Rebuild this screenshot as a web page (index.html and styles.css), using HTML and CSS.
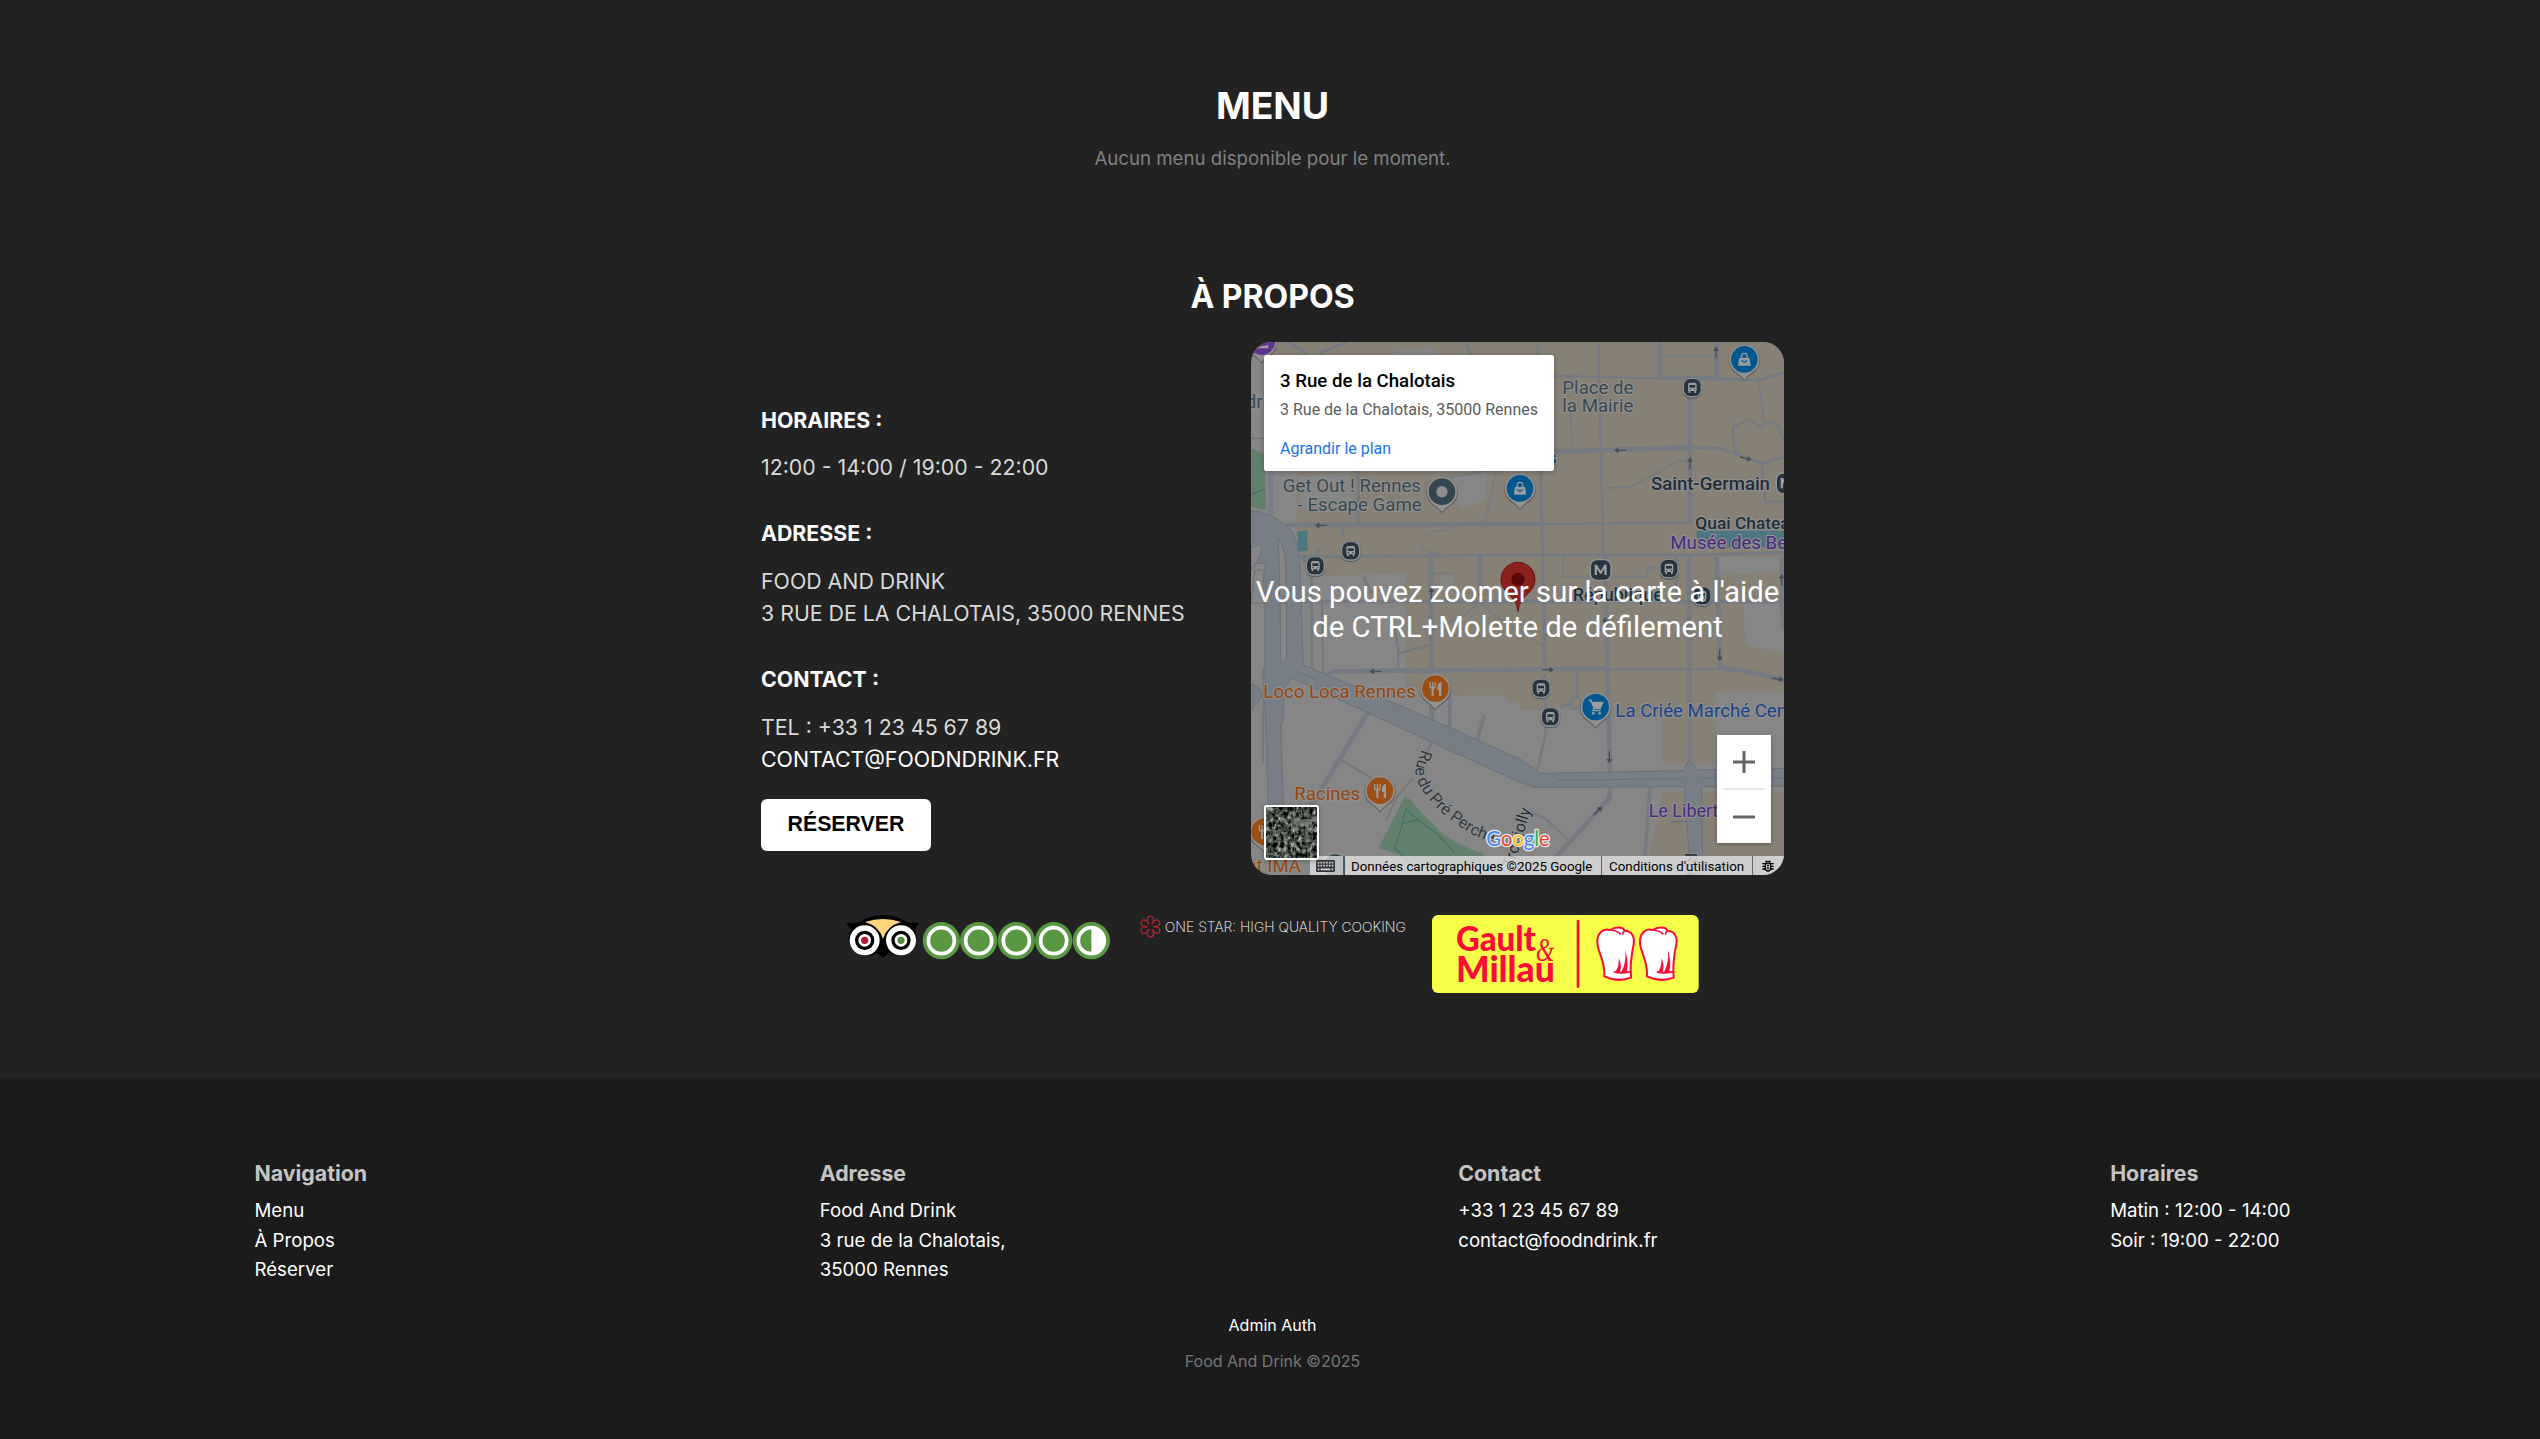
FILE: index.html
```html
<!DOCTYPE html>
<html lang="fr">
<head>
<meta charset="utf-8">
<title>Food And Drink</title>
<link rel="stylesheet" href="styles.css">
</head>
<body>
<main class="main">
  <section class="menu">
    <h1 class="menu-title">MENU</h1>
    <p class="menu-empty">Aucun menu disponible pour le moment.</p>
  </section>

  <section class="about">
    <h2 class="about-title">À PROPOS</h2>
    <div class="about-row">
      <div class="info">
        <div class="info-block first">
          <h3>HORAIRES :</h3>
          <p>12:00 - 14:00 / 19:00 - 22:00</p>
        </div>
        <div class="info-block">
          <h3>ADRESSE :</h3>
          <p>FOOD AND DRINK<br>3 RUE DE LA CHALOTAIS, 35000 RENNES</p>
        </div>
        <div class="info-block">
          <h3>CONTACT :</h3>
          <p>TEL : +33 1 23 45 67 89<br><a href="#">CONTACT@FOODNDRINK.FR</a></p>
        </div>
        <button class="book" type="button">RÉSERVER</button>
      </div>

      <div class="map">
        <svg class="map-canvas" viewBox="33 36 1599 1599" aria-hidden="true">
          <defs>
            <g id="drop"><path d="M0 63C-8 50-20 44-32 34A47 47 0 1 1 32 34C20 44 8 50 0 63Z" fill="#5d5f62" transform="translate(0 3)"/><path d="M0 61C-8 49-20 43-31 33A45 45 0 1 1 31 33C20 43 8 49 0 61Z" fill="#929292"/></g>
            <g id="pin-bag"><use href="#drop"/><circle r="40" fill="#00568f"/><path d="M-15-5H15L19 19H-19Z" fill="#9b9b9b"/><path d="M-8-5V-10A8 8 0 0 1 8-10V-5" fill="none" stroke="#9b9b9b" stroke-width="4"/><path d="M-8 3Q0 14 8 3" fill="none" stroke="#00568f" stroke-width="4"/></g>
            <g id="pin-food"><use href="#drop"/><circle r="40" fill="#9c4f15"/><path d="M-18-20V-7Q-18 0-11 0V22H-5V0Q2 0 2-7V-20H-2V-6H-6V-20H-10V-6H-14V-20ZM18-20Q6-18 6-4V4H11V22H18Z" fill="#9b9b9b"/></g>
            <g id="pin-cart"><use href="#drop"/><circle r="40" fill="#00568f"/><path d="M-21-20H-14L-4 4H13L21-13H-11" fill="none" stroke="#9b9b9b" stroke-width="5"/><path d="M-11-13H21L12 4H-4Z" fill="#9b9b9b"/><path d="M-4 4L-9 11H15" fill="none" stroke="#9b9b9b" stroke-width="4"/><circle cx="-7" cy="19" r="4" fill="#9b9b9b"/><circle cx="12" cy="19" r="4" fill="#9b9b9b"/></g>
            <g id="bus"><rect x="-30" y="-29" width="60" height="62" rx="24" fill="#5c6065"/><rect x="-29" y="-29" width="58" height="58" rx="23" fill="#909498"/><rect x="-25" y="-26" width="50" height="51" rx="19" fill="#27343f"/><path d="M-13-9Q-13-15-7-15H7Q13-15 13-9V10H11V16H6V10H-6V16H-11V10H-13Z" fill="#9a9da0"/><rect x="-9" y="-8" width="18" height="8" fill="#27343f"/><circle cx="-7" cy="5" r="2" fill="#27343f"/><circle cx="7" cy="5" r="2" fill="#27343f"/></g>
            <g id="metro"><rect x="-33" y="-33" width="66" height="66" rx="21" fill="#909498"/><rect x="-29" y="-29" width="58" height="58" rx="18" fill="#27343f"/><path d="M-18 15V-16H-11L0 3 11-16H18V15H11V-3L2 11H-2L-11-3V15Z" fill="#9a9da0"/></g>
            <path id="arrow" d="M-18-2H5V-9L18 0 5 9V2H-18Z" fill="#474d54"/>
            <path id="perche" d="M545 1258L527 1310Q523 1350 550 1385 590 1450 700 1515 750 1540 800 1545"/>
            <path id="tronjolly" d="M819 1616L886 1396"/>
          </defs>
          <rect x="33" y="36" width="1599" height="1599" fill="#868686"/>
          <path d="M100 36H1632V1085H1427V1300H1267V1165H1110V1140H840V1112L815 1125 790 1095 495 1100V730L200 740 170 620V420H95Z" fill="#878175"/>
          <path d="M1270 1385H1632V1578H1225Z" fill="#878175"/>
          <path d="M1427 680H1615V728L1427 735ZM1510 810H1632V970L1516 945ZM1427 1085H1632V1300H1427ZM180 440L330 425 340 530 180 540ZM640 440L740 425V510L660 540ZM470 60L580 50V75H450ZM600 740H640V790H600Z" fill="#868686"/>
          <path d="M33 355L75 375 78 540 33 530Z" fill="#627f6c"/>
          <path d="M495 1400Q510 1405 520 1420L600 1505Q660 1550 730 1570V1600L600 1610 415 1555Z" fill="#637f6d"/>
          <g fill="none" stroke="#48725c" stroke-width="4"><path d="M33 495L75 475M497 1436L535 1470 595 1515 645 1570M497 1436L487 1480 465 1555 510 1600M487 1480L535 1470"/></g>
          <path d="M173 603H202V662L173 665ZM1370 602H1632V652H1370ZM33 605L60 640V680L33 655Z" fill="#4c7781"/>

          <g fill="none" stroke="#757575" stroke-width="5">
            <path d="M70 1010V1300M245 810L250 1040M465 890L475 960 475 1020M475 970L565 945M305 1290L395 1345M520 1345L470 1400 440 1470M33 325H75M1290 1475H1350"/>
          </g>
          <g fill="none" stroke="#757a82" stroke-linejoin="round">
            <path stroke-width="14" d="M140 585L905 582M572 670L575 1180M720 670V812M942 365L1350 353M1350 150V583M1347 675L1350 1310M1260 36V143L1430 145V36M1095 680L1097 810 1110 1330M250 1037Q275 1023 300 1024L1097 1016M1430 680L1440 1015 1500 1020 1632 1050M1110 1370L1108 1405 940 1590"/>
            <path stroke-width="16" stroke-linecap="round" d="M385 1145L240 1385 215 1420"/>
            <path stroke-width="11" d="M178 815H1632M355 420V580M630 1090L628 1215M733 1155L706 1250M1230 1370L1215 1578M1625 680V830L1632 900"/>
            <path stroke-width="9" d="M1350 353L1440 355 1570 400 1632 380M180 680L840 675H1350L1632 668M902 420L915 1020M575 1235L560 1270M1011 1020V1100M960 1130L1000 1120M215 735V1020M1632 128L1560 150 1430 148"/>
            <path stroke-width="7" d="M942 138L1260 145M893 36V75M1075 36L1090 680M905 582L1350 578M1097 1018H1435M915 1030L917 1210 890 1330M1490 370Q1475 340 1480 290L1530 268 1560 292Q1600 265 1615 285L1632 330M1565 400L1575 515H1632M870 1445L915 1465 985 1530"/>
            <path stroke-width="5" d="M1095 475L1175 470 1310 395 1350 390M1555 140L1572 280M990 210L997 355M970 680V740H1220L1225 715 1255 712M1270 77H1430M463 890L475 970 475 1015M475 970L565 948M580 900L675 855 720 815 760 855 915 950M545 645L550 665 600 670M555 730H640M580 450L700 430 860 400M770 420L735 575M560 618L580 605 615 602 650 585"/>
            <path stroke-width="10" d="M145 36L200 70M240 70L320 36M680 36L690 75M1285 680V712M1310 680V812M305 595L312 620M370 740L395 790M240 655L220 685 185 690"/>
            <circle cx="1005" cy="1119" r="17" stroke-width="6"/>
          </g>
          <g fill="#787e86" stroke="#6a7179" stroke-width="3">
            <path d="M30 540Q100 550 145 592 175 620 180 700L190 1005 500 1135 845 1290 900 1330 1330 1322 1340 1300H1360L1372 1320 1640 1315V1368L1385 1370 1388 1640H1352L1333 1370 885 1372 825 1350 500 1202 155 1043 132 1075 130 1170 122 1180 130 1430H85L75 1120V700H30Z"/>
            <path d="M33 1060Q80 1080 60 1110L33 1140"/>
          </g>
          <g fill="#868686" stroke="#6a7179" stroke-width="3"><path d="M120 820H140V985L122 1005ZM115 625Q135 650 136 700L140 800 120 795ZM33 655L60 640Q75 670 33 720ZM45 720H70V820H33Z"/></g>
          <path d="M950 1351L1330 1346M1380 1344H1632M170 1025L230 1050" stroke="#6a7179" stroke-width="3" fill="none"/>
          <path d="M92 420V560" stroke="#787e86" stroke-width="16"/>

          <g class="map-labels">
            <text x="68" y="235" text-anchor="end">dr</text>
            <text x="543" y="486" text-anchor="end">Get Out ! Rennes</text>
            <text x="545" y="542" text-anchor="end">- Escape Game</text>
            <text x="967" y="191">Place de</text>
            <text x="967" y="247">la Mairie</text>
            <text class="station" x="1233" y="479" textLength="357">Saint-Germain</text>
            <text class="station quai" x="1366" y="598">Quai Chateaubriand</text>
            <text class="station republique" x="998" y="813">République</text>
            <text class="museum" x="1291" y="658">Musée des Beaux-Arts</text>
            <text class="museum liberte" x="1226" y="1461">Le Liberté</text>
            <text class="food" x="70" y="1104">Loco Loca Rennes</text>
            <text class="food" x="163" y="1410">Racines</text>
            <text class="food" x="183" y="1626" text-anchor="end">Restaurant IMA</text>
            <text class="shop" x="1126" y="1160">La Criée Marché Central</text>
            <text class="shop station" x="950" y="402" text-anchor="end">s</text>
            <text class="street"><textPath href="#perche">Rue du Pré Perché</textPath></text>
            <text class="street tron"><textPath href="#tronjolly">Tronjolly</textPath></text>
            <text class="street" transform="translate(1336 1568) rotate(90)">Rue</text>
          </g>
          <g>
            <use href="#arrow" transform="translate(243 586) rotate(180)"/><use href="#arrow" transform="translate(1140 361) rotate(180)"/><use href="#arrow" transform="translate(407 1024) rotate(180)"/>
            <use href="#arrow" transform="translate(924 1019)"/><use href="#arrow" transform="translate(1517 385) rotate(16)"/><use href="#arrow" transform="translate(1613 1047) rotate(10)"/>
            <use href="#arrow" transform="translate(1428 67) rotate(-90)"/><use href="#arrow" transform="translate(1350 400) rotate(-90)"/><use href="#arrow" transform="translate(1625 750) rotate(-90)"/><use href="#arrow" transform="translate(1095 880) rotate(-90)"/><use href="#arrow" transform="translate(574 790) rotate(-90)"/>
            <use href="#arrow" transform="translate(1439 975) rotate(90)"/><use href="#arrow" transform="translate(1108 1282) rotate(90)"/><use href="#arrow" transform="translate(1073 1443) rotate(-46)"/><use href="#arrow" transform="translate(722 785) rotate(90)"/>
          </g>
          <use href="#drop" transform="translate(65 35)"/><circle cx="65" cy="35" r="40" fill="#5f3590"/><path d="M45 44L58 50 85 45V55H45Z" fill="#9b9b9b"/>
          <use href="#drop" transform="translate(333 117)"/>
          <use href="#drop" transform="translate(606 485)"/><circle cx="606" cy="485" r="40" fill="#33464f"/><circle cx="606" cy="485" r="17" fill="#8f8f8f"/>
          <use href="#pin-bag" transform="translate(840 475)"/><use href="#pin-bag" transform="translate(1513 88)"/>
          <use href="#pin-food" transform="translate(586 1076)"/><use href="#pin-food" transform="translate(420 1382)"/><use href="#pin-food" transform="translate(74 1505)"/>
          <use href="#pin-cart" transform="translate(1067 1131)"/>
          <use href="#bus" transform="translate(226 708)"/><use href="#bus" transform="translate(332 663)"/><use href="#bus" transform="translate(1357 173)"/><use href="#bus" transform="translate(1287 716)"/><use href="#bus" transform="translate(1386 798)"/><use href="#bus" transform="translate(903 1075)"/><use href="#bus" transform="translate(931 1161)"/>
          <circle cx="285" cy="1607" r="37" fill="#33464f" stroke="#929292" stroke-width="6"/>
          <use href="#metro" transform="translate(1082 720)"/><use href="#metro" transform="translate(1640 460)"/>
          <path d="M834 844C829 815 823 808 803 790 790 776 783 765 783 748A51 51 0 0 1 885 748C885 765 878 776 865 790 845 808 839 815 834 844Z" fill="#8b211c" stroke="#651511" stroke-width="3"/><circle cx="834" cy="748" r="20" fill="#590808"/>
        </svg>

        <p class="map-hint">Vous pouvez zoomer sur la carte à l'aide<br>de CTRL+Molette de défilement</p>

        <div class="place-card">
          <strong>3 Rue de la Chalotais</strong>
          <span>3 Rue de la Chalotais, 35000 Rennes</span>
          <a href="#">Agrandir le plan</a>
        </div>

        <svg class="google" viewBox="735 1490 200 76" aria-label="Google">
          <text x="739" y="1547" textLength="190" lengthAdjust="spacingAndGlyphs"><tspan fill="#4285f4">G</tspan><tspan fill="#ea4335">o</tspan><tspan fill="#fbbc04">o</tspan><tspan fill="#4285f4">g</tspan><tspan fill="#34a853">l</tspan><tspan fill="#ea4335">e</tspan></text>
        </svg>

        <div class="zoom-ctrl">
          <svg viewBox="0 0 54 54"><path d="M16 27H38M27 16V38"/></svg>
          <i></i>
          <svg viewBox="0 0 54 54"><path d="M16 27H38"/></svg>
        </div>

        <div class="attribution">
          <span class="keys"><svg viewBox="0 0 57 36"><rect width="57" height="36" rx="4" fill="#33373b"/><path d="M5 8H52M5 17H52" stroke="#d5d5d5" stroke-width="5" stroke-dasharray="5 3.4"/><path d="M5 28H10M14 28H43M47 28H52" stroke="#d5d5d5" stroke-width="5"/></svg></span>
          <span class="data">Données cartographiques ©2025 Google</span>
          <span class="terms">Conditions d'utilisation</span>
          <span class="bug"><svg viewBox="0 0 36 36"><path d="M10 11H26V24A8 9 0 0 1 10 24ZM12 11A6 6 0 0 1 24 11M11 2L15 6M25 2L21 6M1 11H10M26 11H35M1 19H10M26 19H35M1 27H10M26 27H35M15 17H21M15 24H21" fill="none" stroke="#000" stroke-width="4"/></svg></span>
        </div>

        <svg class="satellite" viewBox="0 0 50 50" aria-hidden="true">
          <filter id="roofs" x="0" y="0" width="100%" height="100%" color-interpolation-filters="sRGB"><feTurbulence type="fractalNoise" baseFrequency=".28 .2" numOctaves="4" seed="8"/><feColorMatrix values="1.3 .3 0 0 -.53 1.3 .3 0 0 -.5 1.3 .3 0 0 -.53 0 0 0 0 1"/></filter>
          <rect width="50" height="50" filter="url(#roofs)"/>
          <path d="M0 14L50 12M0 23L50 22M0 34L50 33M28 0V50M41 0V50" stroke="#6f766f" stroke-width="1" opacity=".65"/>
          <rect x="27" y="12" width="18" height="6" fill="#7a8078" opacity=".6"/>
        </svg>
      </div>
    </div>

    <div class="awards">
      <svg class="award tripadvisor" viewBox="49 45 800 135" aria-label="Tripadvisor">
        <path d="M50 68H86Q120 45 160 45T235 68H268L256 88A55 55 0 0 1 178 158L160 174 142 158A55 55 0 0 1 62 88Z" fill="#000"/>
        <path d="M106 66Q160 48 214 66 172 78 160 116 148 78 106 66Z" fill="#ffd67b"/>
        <g fill="#fff"><circle cx="105" cy="121" r="45"/><circle cx="214" cy="121" r="45"/></g>
        <g fill="none" stroke="#000" stroke-width="10"><circle cx="105" cy="121" r="24"/><circle cx="214" cy="121" r="24"/></g>
        <circle cx="105" cy="121" r="11" fill="#b01c33"/><circle cx="214" cy="121" r="11" fill="#4f9040"/>
        <g fill="#5a9742"><circle cx="335" cy="122" r="56"/><circle cx="447" cy="122" r="56"/><circle cx="560" cy="122" r="56"/><circle cx="672" cy="122" r="56"/><circle cx="785" cy="122" r="56"/></g>
        <g fill="#5a9742" stroke="#fff" stroke-width="11"><circle cx="335" cy="122" r="39"/><circle cx="447" cy="122" r="39"/><circle cx="560" cy="122" r="39"/><circle cx="672" cy="122" r="39"/><circle cx="785" cy="122" r="39"/></g>
        <path d="M785 83A39 39 0 0 1 785 161Z" fill="#fff"/>
      </svg>
      <div class="award michelin">
        <svg viewBox="-33 -35 66 70" aria-hidden="true"><g fill="none" stroke="#c0242f" stroke-width="3.6"><path id="petal" d="M-5-8C-13-17-12-33 0-33S13-17 5-8"/><use href="#petal" transform="rotate(60)"/><use href="#petal" transform="rotate(120)"/><use href="#petal" transform="rotate(180)"/><use href="#petal" transform="rotate(240)"/><use href="#petal" transform="rotate(300)"/></g></svg>
        <span>ONE STAR: HIGH QUALITY COOKING</span>
      </div>
      <svg class="award gault" viewBox="486 45 800 234" aria-label="Gault et Millau">
        <rect x="486" y="45" width="800" height="234" rx="18" fill="#f7ff48"/>
        <g fill="#ff0b3a"><text x="558" y="154" font-size="105" textLength="240" lengthAdjust="spacingAndGlyphs">Gault</text><text x="558" y="245" font-size="106" textLength="296" lengthAdjust="spacingAndGlyphs">Millau</text>
        <text class="amp" x="797" y="184" font-size="100" textLength="56" lengthAdjust="spacingAndGlyphs">&amp;</text></g>
        <rect x="920" y="59" width="8" height="205" rx="4" fill="#ff0b3a"/>
        <g id="toque"><path d="M1003 229C1006 185 985 160 982 130 980 98 1000 84 1020 90 1035 80 1060 80 1064 92 1085 92 1095 112 1091 132 1084 165 1080 200 1083 233Q1045 248 1003 229Z" fill="#fff" stroke="#ff0b3a" stroke-width="6"/><path d="M1022 90Q1042 92 1052 103M1064 92Q1058 98 1058 104M1083 215Q1050 222 1032 215" fill="none" stroke="#ff0b3a" stroke-width="5"/><path d="M1036 216Q1048 200 1046 175 1057 195 1050 216ZM1054 216Q1069 190 1066 150 1077 190 1070 216Z" fill="#ff0b3a"/></g>
        <use href="#toque" x="128"/>
      </svg>
    </div>
  </section>
</main>

<footer class="footer">
  <div class="footer-cols">
    <nav><h4>Navigation</h4><a href="#">Menu</a><a href="#">À Propos</a><a href="#">Réserver</a></nav>
    <div><h4>Adresse</h4><p>Food And Drink</p><p>3 rue de la Chalotais,</p><p>35000 Rennes</p></div>
    <div><h4>Contact</h4><p>+33 1 23 45 67 89</p><a href="#">contact@foodndrink.fr</a></div>
    <div><h4>Horaires</h4><p>Matin : 12:00 - 14:00</p><p>Soir : 19:00 - 22:00</p></div>
  </div>
  <a class="admin" href="#">Admin Auth</a>
  <p class="copyright">Food And Drink ©2025</p>
</footer>
</body>
</html>
```
FILE: styles.css
```css
* { box-sizing: border-box; margin: 0; padding: 0; }
html { overflow: hidden; background: #1b1b1b; }
body {
  width: 2545px;
  background: #222;
  color: #fff;
  font-family: "Inter", "Liberation Sans", sans-serif;
  font-size: 21.333px;
  line-height: 32px;
}
a { color: inherit; text-decoration: none; }
svg { display: block; }

.main { height: 1078px; display: flex; flex-direction: column; align-items: center; padding-top: 78px; }
.menu { text-align: center; }
.menu-title { font-size: 37.333px; line-height: 56px; }
.menu-empty { margin-top: 11px; font-size: 18.667px; line-height: 28px; color: #808080; }

.about { margin-top: 100px; display: flex; flex-direction: column; align-items: center; }
.about-title { font-size: 32px; line-height: 48px; }
.about-row { display: flex; width: 1023px; justify-content: space-between; margin-top: 21px; }

.info { padding-top: 61.5px; color: #d9d9d9; }
.info h3 { font-size: 21.333px; font-weight: 700; color: #fff; margin-bottom: 16px; }
.info-block { margin-bottom: 34px; }
.info-block.first h3 { margin-bottom: 15px; }
.info-block a { color: #fff; }
.info-block:nth-child(3) { margin-bottom: 24.5px; }
.book {
  display: block; width: 170px; height: 52px; padding: 0 0 2px;
  border: 0; border-radius: 6px; background: #fff; color: #000;
  font: 700 21.333px "Liberation Sans", Arial, sans-serif;
}

.map {
  position: relative; width: 533px; height: 533px;
  border-radius: 21px; overflow: hidden;
  font-family: "Roboto", sans-serif;
}
.map-canvas { width: 533px; height: 533px; }
.map-labels { font-size: 56px; fill: #3a484f; stroke: #8f8f8f; stroke-width: 7px; stroke-linejoin: round; paint-order: stroke; }
.map-labels .station { font-weight: 500; fill: #222f3b; }
.map-labels .quai { font-size: 52px; }
.map-labels .republique { font-size: 54px; }
.map-labels .museum { fill: #4a2a80; }
.map-labels .liberte { font-size: 54px; }
.map-labels .food { fill: #944710; }
.map-labels .shop { fill: #1b4488; }
.map-labels .street { font-size: 49px; fill: #33383d; stroke-width: 5px; }
.map-labels .tron { fill: #252c33; }

.map-hint {
  position: absolute; inset: 0; display: flex; align-items: center; justify-content: center;
  padding-top: 2px;
  text-align: center; white-space: nowrap; font-size: 29.333px; line-height: 35px; color: #fff;
}
.place-card {
  position: absolute; left: 13px; top: 13px; width: 290px; height: 116px;
  padding: 14px 16px; background: #fff; border-radius: 2.5px;
  box-shadow: 0 1px 5px rgba(0, 0, 0, .3);
  display: flex; flex-direction: column; white-space: nowrap; font-size: 16px; line-height: 20px;
}
.place-card strong { font-size: 18.667px; font-weight: 500; line-height: 25px; color: #000; }
.place-card span { margin-top: 5.5px; color: #5b5b5b; }
.place-card a { margin-top: 19px; color: #1a73e8; }

.google { position: absolute; left: 234px; top: 485px; width: 66.6px; height: 25.3px; }
.google text { font: 400 64px "Lato", sans-serif; stroke: #e8e8e8; stroke-width: 8px; paint-order: stroke; stroke-linejoin: round; }

.zoom-ctrl {
  position: absolute; left: 466px; top: 393px; width: 54px; height: 108px;
  background: #fff; box-shadow: 0 1px 5px rgba(0, 0, 0, .3);
  display: flex; flex-direction: column; align-items: center;
}
.zoom-ctrl svg { width: 54px; height: 54px; margin-bottom: -1px; fill: none; stroke: #666; stroke-width: 3px; }
.zoom-ctrl i { width: 40px; height: 2px; background: #e6e6e6; flex: none; }

.attribution {
  position: absolute; right: 0; bottom: 0; height: 19px; width: 474px;
  display: flex; background: rgba(229, 229, 229, .75);
  color: #000; font-size: 13.333px; line-height: 19px; white-space: nowrap;
}
.attribution span { display: flex; align-items: center; padding-left: 6px; padding-top: 1px; }
.attribution .keys { width: 35px; border-right: 2px solid #4a5963; }
.attribution .keys svg { width: 19px; height: 12px; }
.attribution .data { width: 256px; }
.attribution .terms { width: 151px; padding-left: 7px; border-left: 1px solid #666; }
.attribution .bug { width: 32px; padding-left: 9px; border-left: 1px solid #666; }
.attribution .bug svg { width: 12px; height: 12px; }

.satellite {
  position: absolute; left: 13px; top: 463px; width: 55px; height: 55px;
  border: 2px solid #fff; border-radius: 3px; background: #2d332f;
  box-shadow: 0 1px 4px rgba(0, 0, 0, .3);
}

.awards { display: flex; align-items: flex-start; gap: 26.6px; margin-top: 40px; }
.award { width: 266.7px; }
.tripadvisor { height: 45px; }
.michelin { display: flex; align-items: flex-start; padding-left: 1.3px; }
.michelin svg { width: 22px; height: 23.3px; }
.michelin span { margin-left: 3.6px; font-size: 13.96px; font-weight: 200; line-height: 24px; white-space: nowrap; color: #fff; }
.gault { height: 78px; font-family: "Lato", sans-serif; font-weight: 900; }
.gault .amp { font-family: "Liberation Serif", serif; font-weight: 400; font-style: italic; }

.footer { height: 361px; padding: 79px 254.5px 0; background: #1b1b1b; text-align: center; }
.footer-cols { display: flex; justify-content: space-between; text-align: left; height: 156px; font-size: 18.667px; line-height: 29.5px; }
.footer-cols > * { display: flex; flex-direction: column; }
.footer h4 { font-size: 21.333px; line-height: 32px; margin-bottom: 7px; color: #c4c4c4; }
.admin { display: block; font-size: 16px; line-height: 24px; }
.copyright { margin-top: 12px; font-size: 16px; line-height: 24px; color: #777; }
```
